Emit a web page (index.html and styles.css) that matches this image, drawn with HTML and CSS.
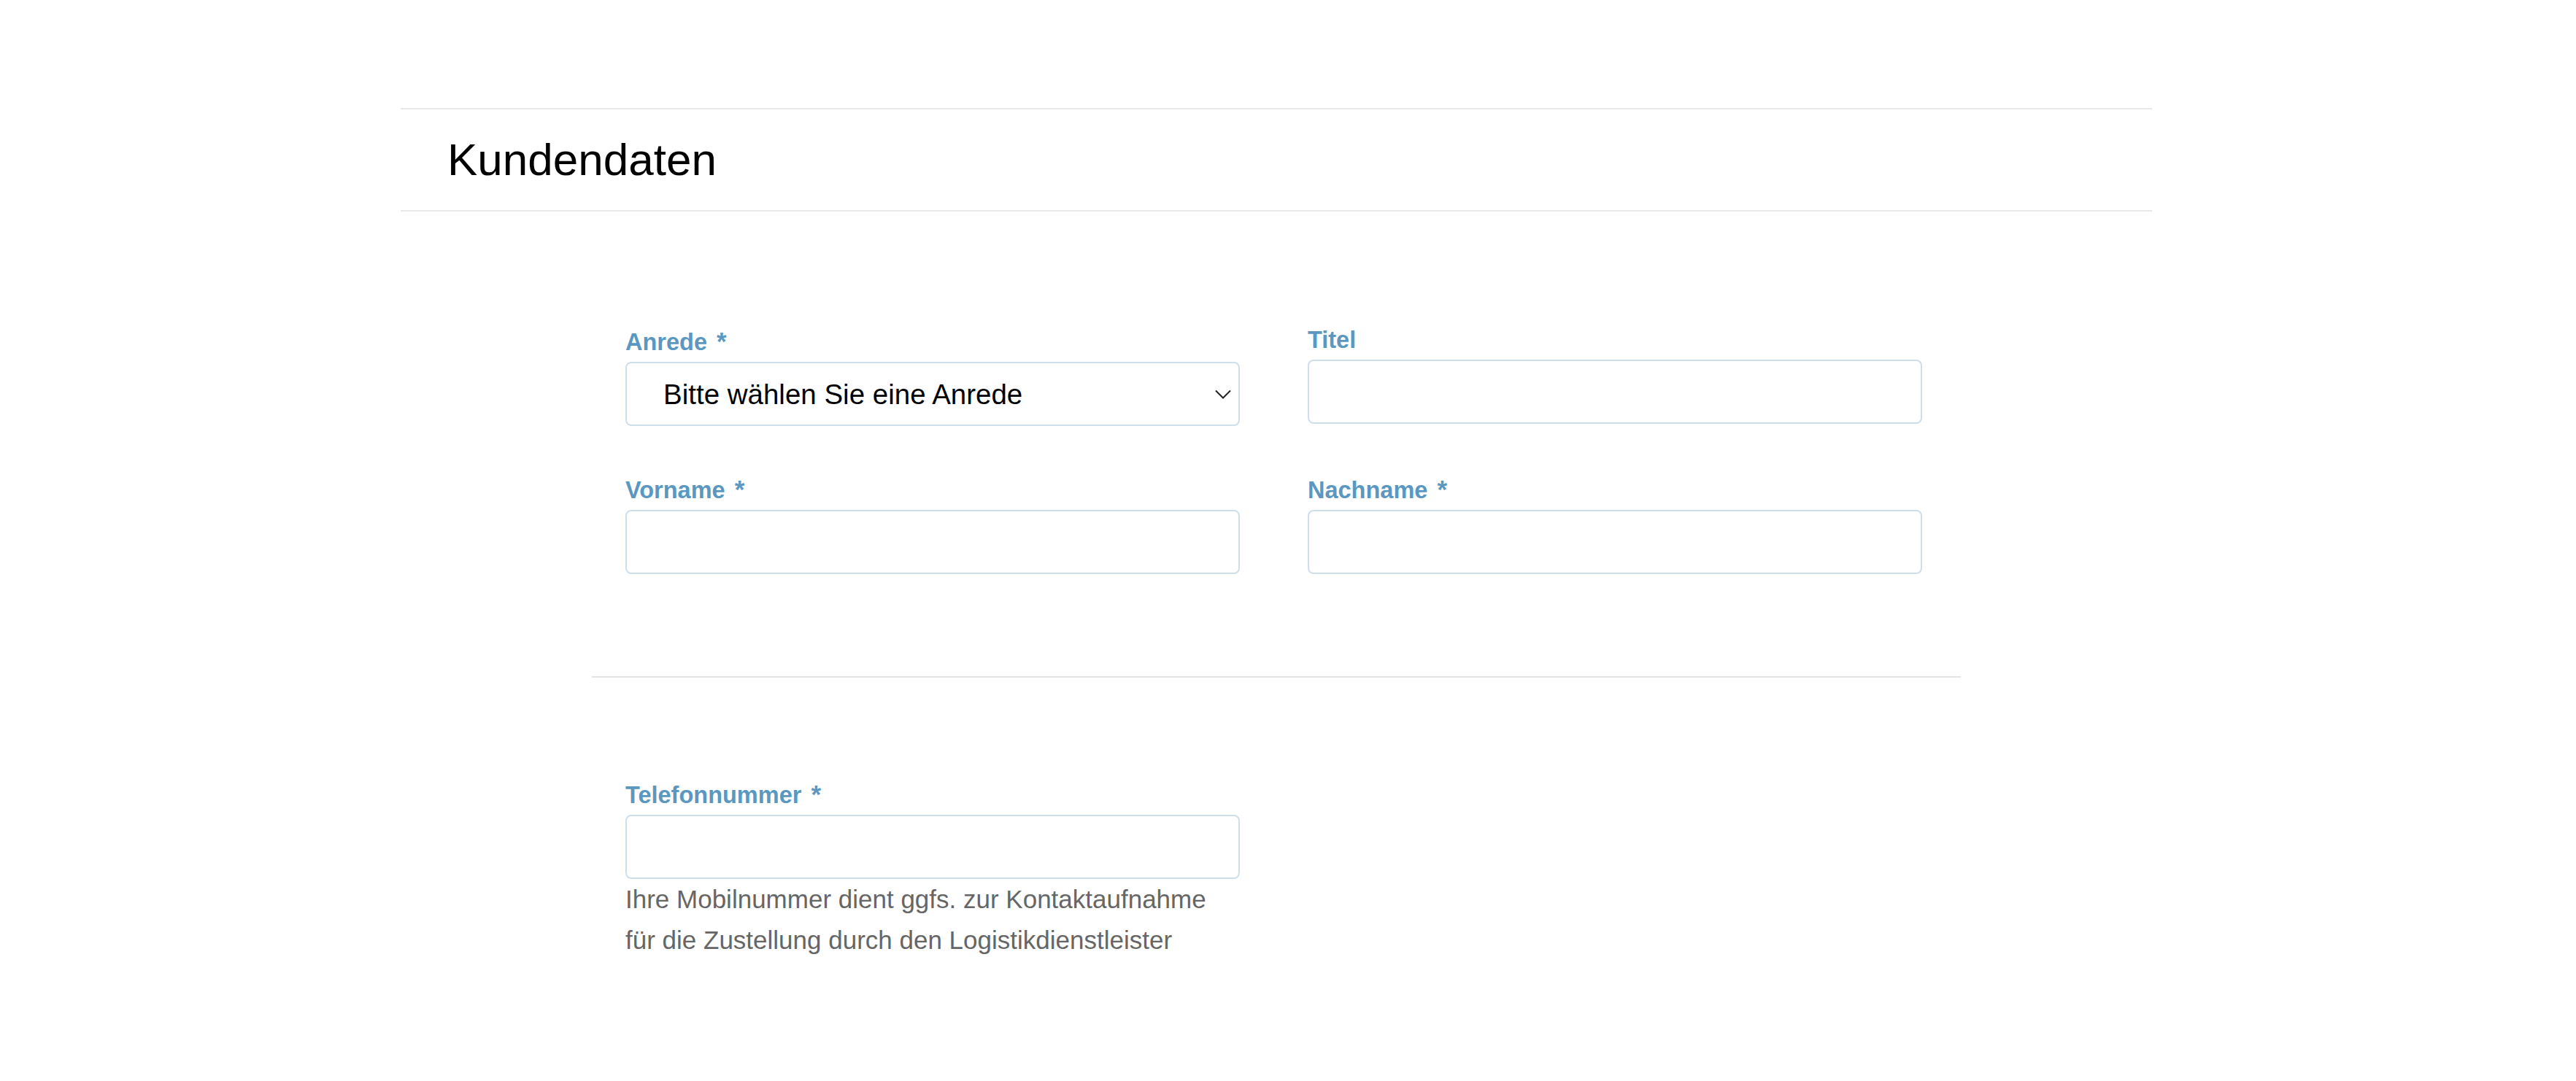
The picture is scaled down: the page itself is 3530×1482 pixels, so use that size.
FILE: index.html
```html
<!DOCTYPE html>
<html lang="de">
<head>
    <meta charset="UTF-8">
    <meta name="viewport" content="width=device-width, initial-scale=1.0">
    <title>Kundendaten</title>
    <link rel="stylesheet" href="styles.css">
</head>
<body>
    <div class="container">
        <div class="page-header">
            <h1>Kundendaten</h1>
        </div>

        <form id="customerForm" class="customer-form" action="/api/customer" method="POST">
            <div class="form-section">
                <div class="form-grid">
                    <div class="form-group">
                        <label for="salutation">Anrede<span class="req">*</span></label>
                        <div class="select-wrap">
                            <select id="salutation" name="salutation" class="form-control" required>
                                <option value="">Bitte wählen Sie eine Anrede</option>
                                <option value="herr">Herr</option>
                                <option value="frau">Frau</option>
                                <option value="divers">Divers</option>
                            </select>
                            <svg class="select-arrow" width="22" height="13" viewBox="0 0 22 13" aria-hidden="true">
                                <polyline points="1,1.5 11,11.5 21,1.5" fill="none" stroke="#222" stroke-width="2"/>
                            </svg>
                        </div>
                    </div>

                    <div class="form-group">
                        <label for="title">Titel</label>
                        <input type="text" id="title" name="title" class="form-control">
                    </div>

                    <div class="form-group">
                        <label for="firstname">Vorname<span class="req">*</span></label>
                        <input type="text" id="firstname" name="firstname" class="form-control" required>
                    </div>

                    <div class="form-group">
                        <label for="lastname">Nachname<span class="req">*</span></label>
                        <input type="text" id="lastname" name="lastname" class="form-control" required>
                    </div>
                </div>
            </div>

            <div class="form-section">
                <div class="form-grid">
                    <div class="form-group">
                        <label for="phone">Telefonnummer<span class="req">*</span></label>
                        <input type="tel" id="phone" name="phone" class="form-control" required>
                        <p class="help-block">Ihre Mobilnummer dient ggfs. zur Kontaktaufnahme für die Zustellung durch den Logistikdienstleister</p>
                    </div>
                </div>
            </div>
        </form>
    </div>
</body>
</html>
```

FILE: styles.css
```css
html, body {
    margin: 0;
    background: #fff;
}
body {
    padding-right: 32px;
    font-family: "Liberation Sans", Arial, sans-serif;
    color: #000;
}
.container {
    width: 2400px;
    margin: 148px auto 0;
}
.page-header {
    border-top: 2px solid #e8e8e8;
    border-bottom: 2px solid #e8e8e8;
    padding: 34px 64px;
}
.page-header h1 {
    margin: 0;
    font-size: 62px;
    font-weight: normal;
    line-height: 70px;
}
.customer-form {
    margin: 0 262px;
}
.form-section {
    padding: 140px 46px;
}
.form-section:first-child {
    padding-top: 158px;
}
.form-section + .form-section {
    border-top: 2px solid #e5e5e5;
    padding-bottom: 0;
}
.form-grid {
    display: grid;
    grid-template-columns: repeat(2, 842px);
    column-gap: 93px;
    row-gap: 67px;
}
.form-group label {
    display: block;
    margin-bottom: 8px;
    font-size: 32.5px;
    font-weight: bold;
    color: #5a98c2;
}
.req {
    margin-left: 13px;
    font-size: 35px;
}
.form-control {
    display: block;
    box-sizing: border-box;
    width: 100%;
    height: 88px;
    margin: 0;
    border: 2px solid #cddfeb;
    border-radius: 8px;
    background: #fff;
    font-family: inherit;
    font-size: 38.5px;
    color: #000;
    outline: none;
}
input.form-control {
    padding: 0 22px;
}
.select-wrap {
    position: relative;
}
select.form-control {
    padding: 0 60px 0 50px;
    appearance: none;
    -webkit-appearance: none;
}
.select-arrow {
    position: absolute;
    right: 12px;
    top: 50%;
    margin-top: -6px;
    pointer-events: none;
}
.help-block {
    max-width: 820px;
    margin: 0;
    font-size: 35px;
    line-height: 56px;
    color: #666;
}
```
